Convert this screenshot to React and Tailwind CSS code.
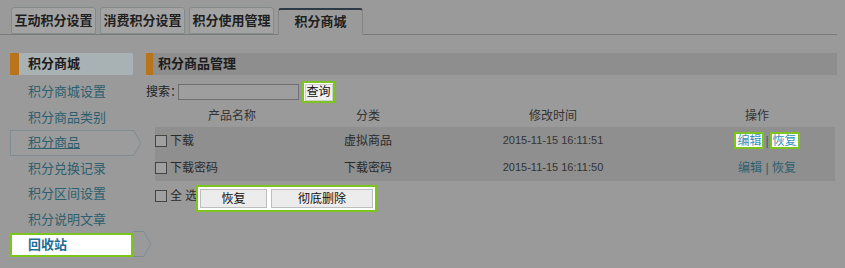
import React from 'react';

const tabs = ['互动积分设置', '消费积分设置', '积分使用管理', '积分商城'];
const menu = ['积分商城设置', '积分商品类别', '积分商品', '积分兑换记录', '积分区间设置', '积分说明文章', '回收站'];
const rows = [
    { name: '下载', cat: '虚拟商品', time: '2015-11-15 16:11:51', hl: true },
    { name: '下载密码', cat: '下载密码', time: '2015-11-15 16:11:50', hl: false },
];

const Box = () => <span className="inline-block w-[12px] h-[12px] border border-[#444] bg-[#a0a0a0] shrink-0" />;

const App = () => {
    return (
        <div
            className="w-[845px] h-[268px] bg-[#9a9a9a] text-[12px] text-[#2a2a2a] overflow-hidden"
            style={{ fontFamily: '"Liberation Sans", "Noto Sans CJK SC", sans-serif' }}
        >
            {/* tabs */}
            <div className="flex items-end gap-[4px] pl-[11px] pt-[8px] mr-[8px] border-b border-[#7a7a7a] h-[35px]">
                {tabs.map((t, i) =>
                    i === 3 ? (
                        <div
                            key={t}
                            className="w-[85px] h-[27px] -mb-px flex items-center justify-center border border-[#858585] border-t-2 border-t-[#2b3a44] border-b-[#9a9a9a] bg-[#9a9a9a] font-bold text-[13px] text-[#1f1f1f] rounded-t-[3px]"
                        >
                            {t}
                        </div>
                    ) : (
                        <div
                            key={t}
                            className="w-[85px] h-[27px] flex items-center justify-center border border-[#858a8c] bg-[#a3a3a3] font-bold text-[13px] text-[#1f1f1f] rounded-t-[3px]"
                        >
                            {t}
                        </div>
                    )
                )}
            </div>

            <div className="flex mt-[18px] pl-[10px] pr-[8px] gap-[13px]">
                {/* sidebar */}
                <div className="w-[123px] shrink-0">
                    <div className="h-[22px] flex items-center bg-[#a8b1b4]">
                        <span className="w-[9px] h-full bg-[#b8741a]" />
                        <span className="pl-[9px] font-bold text-[13px] text-[#1c1c1c]">积分商城</span>
                    </div>
                    <div className="mt-[4px]">
                        {menu.map((m) => {
                            if (m === '积分商品') {
                                return (
                                    <div key={m} className="relative h-[25.5px] flex items-center pl-[18px]">
                                        <svg className="absolute left-0 top-0" width="132" height="26" viewBox="0 0 132 26">
                                            <path d="M0.5 0.5 H123.5 L131 13 L123.5 25.5 H0.5 Z" fill="#9c9c9c" stroke="#7f8c92" />
                                        </svg>
                                        <span className="relative text-[13px] text-[#2d5f6e] underline">{m}</span>
                                    </div>
                                );
                            }
                            if (m === '回收站') {
                                return (
                                    <div key={m} className="relative h-[25.5px] flex items-center">
                                        <svg className="absolute left-0 top-[-1px]" width="142" height="26" viewBox="0 0 142 26">
                                            <path d="M123 0.5 H133.5 L141 13 L133.5 25.5 H123" fill="none" stroke="#7f8c92" />
                                        </svg>
                                        <div className="relative w-[123px] h-[24px] flex items-center pl-[16px] bg-white border-2 border-[#7cc51f]">
                                            <span className="font-bold text-[13px] text-[#1f6d90]">{m}</span>
                                        </div>
                                    </div>
                                );
                            }
                            return (
                                <div key={m} className="h-[25.5px] flex items-center pl-[18px] text-[13px] text-[#2d5f6e]">
                                    {m}
                                </div>
                            );
                        })}
                    </div>
                </div>

                {/* main */}
                <div className="flex-1">
                    <div className="h-[22px] flex items-center bg-[#8e8e8e]">
                        <span className="w-[7px] h-full bg-[#b8741a]" />
                        <span className="pl-[5px] font-bold text-[13px] text-[#1c1c1c]">积分商品管理</span>
                    </div>

                    <div className="flex items-center h-[26px] mt-[4px]">
                        <span className="text-[12px] text-[#222]">搜索：</span>
                        <span className="w-[121px] h-[16px] border border-[#6f6f6f] bg-[#9e9e9e] ml-[-4px]" />
                        <span className="ml-[3px] w-[33px] h-[22px] border-2 border-[#7cc51f] bg-white flex items-center justify-center">
                            <span className="w-[28px] h-[17px] flex items-center justify-center bg-[#f0f0f0] border border-[#cfcfcf] text-[12px] text-[#111]">
                                查询
                            </span>
                        </span>
                    </div>

                    <div className="ml-[9px] w-[680px]">
                        <div className="grid grid-cols-[154px_118px_252px_156px] h-[22px] items-center text-center text-[#333]">
                            <span>产品名称</span>
                            <span>分类</span>
                            <span>修改时间</span>
                            <span>操作</span>
                        </div>
                        <div className="bg-[#8f8f8f]">
                            {rows.map((r) => (
                                <div key={r.name} className="grid grid-cols-[154px_118px_252px_156px] h-[27px] items-center text-[#2a2a2a]">
                                    <span className="flex items-center gap-[3px]">
                                        <Box />
                                        {r.name}
                                    </span>
                                    <span className="text-center">{r.cat}</span>
                                    <span className="text-center text-[11px] text-[#333]">{r.time}</span>
                                    <span className="flex items-center justify-center pl-[20px]">
                                        {r.hl ? (
                                            <>
                                                <span className="px-[1px] h-[17px] flex items-center border-2 border-[#7cc51f] bg-white text-[#3a8fb5]">编辑</span>
                                                <span className="mx-[1px] text-[#2d5f6e]">|</span>
                                                <span className="px-[1px] h-[17px] flex items-center border-2 border-[#7cc51f] bg-white text-[#3a8fb5]">恢复</span>
                                            </>
                                        ) : (
                                            <span className="text-[#2d5f6e]">编辑 | 恢复</span>
                                        )}
                                    </span>
                                </div>
                            ))}
                        </div>

                        <div className="flex items-center mt-[4px]">
                            <span className="flex items-center gap-[3px] -mt-[5px] w-[41px] shrink-0 whitespace-nowrap">
                                <Box />
                                <span>全 选</span>
                            </span>
                            <span className="flex items-center gap-[4px] h-[27px] px-[2px] border-2 border-[#7cc51f] bg-white">
                                <span className="w-[67px] h-[19px] flex items-center justify-center bg-[#ececec] border border-[#bdbdbd] text-[#111]">恢复</span>
                                <span className="w-[102px] h-[19px] flex items-center justify-center bg-[#ececec] border border-[#bdbdbd] text-[#111]">彻底删除</span>
                            </span>
                        </div>
                    </div>
                </div>
            </div>
        </div>
    );
};

export default App;
